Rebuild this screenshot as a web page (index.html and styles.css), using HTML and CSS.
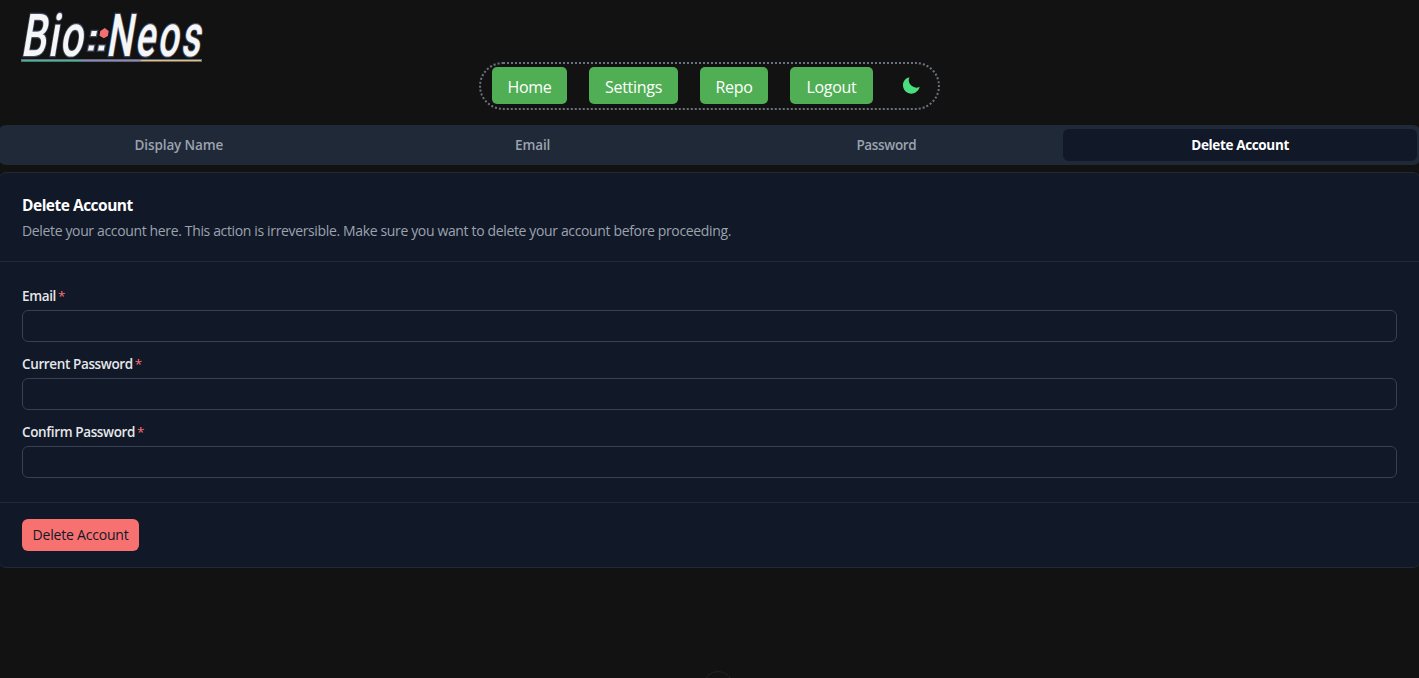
FILE: index.html
```html
<!DOCTYPE html>
<html lang="en">
<head>
<meta charset="utf-8">
<title>Bio::Neos Settings</title>
<link rel="stylesheet" href="styles.css">
</head>
<body>
<header class="header">
  <svg class="logo" width="210" height="62" viewBox="0 0 210 62" role="img" aria-label="Bio::Neos">
    <g class="wordmark">
      <text transform="translate(20.5 56) skewX(-9.5) scale(.68 1)" textLength="91" lengthAdjust="spacing">Bio</text>
      <text transform="translate(105.8 56) skewX(-9.5) scale(.63 1)" textLength="149" lengthAdjust="spacing">Neos</text>
      <path d="M91.7 31h5.3l-1 5h-5.300zM89 45.500h5.200l-1 5h-5.200zM99 45.500h5.700l-1 5h-5.700z"/>
    </g>
    <path fill="#ef706f" d="M104.800 28l3.900 3-.8 4.900-4.100 2.400-4.300-2.500.8-4.800z"/>
    <path fill="#626b78" d="M21 59h181v3H21z"/>
    <path fill="#2fc495" d="M22 60h60v1H22z"/>
    <path fill="#8f83c0" d="M82 60h59v1H82z"/>
    <path fill="#f0bd62" d="M141 60h60v1h-60z"/>
  </svg>
  <nav class="nav">
    <a class="nav-link home"><span>Home</span></a>
    <a class="nav-link settings"><span>Settings</span></a>
    <a class="nav-link repo"><span>Repo</span></a>
    <a class="nav-link logout"><span>Logout</span></a>
    <svg class="moon" width="21" height="21" viewBox="0 0 20 20"><path fill="#4ade80" d="M17.800 11.300A7.200 7.200 0 0 1 8 2.200C4.400 3 1.900 6 1.900 9.700c0 4.600 3.600 8.100 8.100 8.100 3.800 0 7-2.800 7.800-6.500z"/></svg>
  </nav>
</header>
<main class="content">
  <div class="tabs">
    <button class="tab"><span>Display Name</span></button>
    <button class="tab"><span>Email</span></button>
    <button class="tab tight"><span>Password</span></button>
    <button class="tab active"><span>Delete Account</span></button>
  </div>
  <section class="card">
    <div class="card-head">
      <h1 class="title">Delete Account</h1>
      <p class="description">Delete your account here. This action is irreversible. Make sure you want to delete your account before proceeding.</p>
    </div>
    <form class="card-body">
      <div class="field"><label for="email" class="label">Email</label><input id="email" class="input"></div>
      <div class="field"><label for="current" class="label">Current Password</label><input id="current" class="input" type="password"></div>
      <div class="field"><label for="confirm" class="label">Confirm Password</label><input id="confirm" class="input" type="password"></div>
    </form>
    <div class="card-foot"><button class="delete">Delete Account</button></div>
  </section>
</main>
<div class="handle"></div>
</body>
</html>
```
FILE: styles.css
```css
* { box-sizing: border-box; }
body {
  margin: 0;
  height: 678px;
  overflow: hidden;
  background: #121212;
  color: #fff;
  font-family: "Open Sans", "Noto Sans", sans-serif;
  font-size: 14px;
  line-height: 20px;
}
button { border: 0; font: inherit; }
.header { display: flex; flex-direction: column; height: 125px; }
.logo { display: block; flex: none; overflow: visible; }
.wordmark {
  font-family: Roboto, sans-serif;
  font-size: 59px;
  font-weight: 500;
  fill: #f6f6f6;
  stroke: #3f4a63;
  stroke-width: 2.4px;
  paint-order: stroke;
}
.nav {
  display: flex;
  align-items: flex-start;
  gap: 22px;
  align-self: center;
  width: 461px;
  height: 48px;
  padding: 3px 0 0 11px;
  border: 2px dotted #6b7280;
  border-radius: 24px;
}
.nav-link {
  display: flex;
  align-items: center;
  justify-content: center;
  height: 37px;
  padding-top: 2px;
  border-radius: 5px;
  background: #50af55;
  font-size: 16px;
  line-height: 24px;
  letter-spacing: -.3px;
  white-space: nowrap;
}
.home { width: 75px; }
.settings { width: 89px; }
.repo { width: 68px; }
.logout { width: 83px; }
.moon { margin: 8px 0 0 6px; }
.content { margin: 0 -2px; }
.tabs {
  display: grid;
  grid-template-columns: repeat(4, 1fr);
  height: 40px;
  padding: 4px;
  border-radius: 8px;
  background: #1f2937;
}
.tab {
  padding: 0;
  border-radius: 6px;
  background: none;
  color: #9ca3af;
  font-size: 13.5px;
  font-weight: 600;
  letter-spacing: -.12px;
}
.tab.tight { letter-spacing: -.35px; }
.tab.active { background: #111827; color: #fff; font-weight: 700; letter-spacing: -.36px; }
.card {
  height: 396px;
  margin-top: 7px;
  border: 1px solid #1f2937;
  border-radius: 8px;
  background: #111827;
}
.card-head { height: 88px; padding: 20px 23px 0; }
.title { margin: 0; font-size: 15.5px; line-height: 24px; font-weight: 700; letter-spacing: -.5px; }
.description { margin: 4px 0 0; color: #9ca3af; letter-spacing: -.355px; }
.card-body {
  display: flex;
  flex-direction: column;
  gap: 16px;
  height: 241px;
  padding: 24px 23px 0;
  border-top: 1px solid #1f2937;
}
.field { display: flex; flex-direction: column; gap: 4px; height: 52px; }
.label { height: 20px; color: #e5e7eb; font-size: 13.5px; font-weight: 600; letter-spacing: -.37px; }
.label::after { content: "*"; margin-left: 2px; color: #f87171; font-weight: 400; }
.input {
  width: 100%;
  height: 32px;
  flex: none;
  margin: 0;
  border: 1px solid #374151;
  border-radius: 6px;
  background: #111827;
}
.card-foot { padding: 16px 23px; border-top: 1px solid #1f2937; }
.delete {
  display: block;
  width: 117px;
  height: 32px;
  padding: 0;
  border-radius: 6px;
  background: #f87171;
  color: #111827;
  font-weight: 500;
  letter-spacing: -.2px;
}
.handle {
  width: 30px;
  height: 30px;
  margin: 103px auto 0;
  border: 1px solid #222;
  border-radius: 50%;
  position: relative;
  left: 8px;
}
```
